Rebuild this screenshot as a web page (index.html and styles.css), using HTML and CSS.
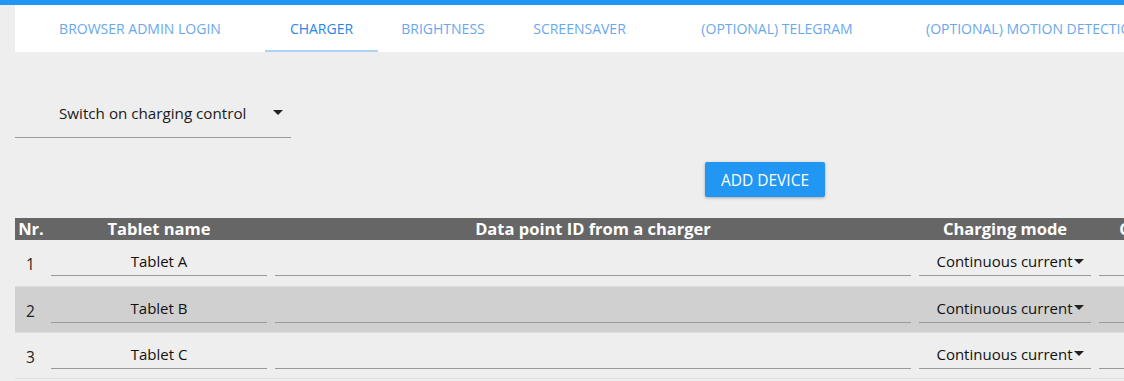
FILE: index.html
```html
<!DOCTYPE html>
<html>
<head>
<meta charset="utf-8">
<link rel="stylesheet" href="styles.css">
</head>
<body>
<div class="topbar"></div>
<div class="page">
  <nav class="tabs">
    <div class="tab tab-1">BROWSER ADMIN LOGIN</div>
    <div class="tab tab-2 active">CHARGER</div>
    <div class="tab tab-3">BRIGHTNESS</div>
    <div class="tab tab-4">SCREENSAVER</div>
    <div class="tab tab-5">(OPTIONAL) TELEGRAM</div>
    <div class="tab tab-6">(OPTIONAL) MOTION DETECTION</div>
  </nav>

  <div class="select-row">
    <div class="select">
      <span class="select-text">Switch on charging control</span>
      <span class="caret"></span>
    </div>
  </div>

  <div class="button-row">
    <button class="btn">ADD DEVICE</button>
  </div>

  <table class="grid">
    <colgroup>
      <col class="c-nr"><col class="c-name"><col class="c-dp"><col class="c-mode"><col class="c-more">
    </colgroup>
    <thead>
      <tr><th>Nr.</th><th>Tablet name</th><th>Data point ID from a charger</th><th>Charging mode</th><th>Charging current</th></tr>
    </thead>
    <tbody>
      <tr>
        <td class="nr">1</td>
        <td><div class="field center">Tablet A</div></td>
        <td><div class="field"></div></td>
        <td><div class="field mode">Continuous current<span class="caret small"></span></div></td>
        <td><div class="field"></div></td>
      </tr>
      <tr class="alt">
        <td class="nr">2</td>
        <td><div class="field center">Tablet B</div></td>
        <td><div class="field"></div></td>
        <td><div class="field mode">Continuous current<span class="caret small"></span></div></td>
        <td><div class="field"></div></td>
      </tr>
      <tr>
        <td class="nr">3</td>
        <td><div class="field center">Tablet C</div></td>
        <td><div class="field"></div></td>
        <td><div class="field mode">Continuous current<span class="caret small"></span></div></td>
        <td><div class="field"></div></td>
      </tr>
    </tbody>
  </table>
</div>
</body>
</html>
```
FILE: styles.css
```css
html, body {
  margin: 0;
  padding: 0;
  background: #eeeeee;
  font-family: "Open Sans", "Noto Sans", sans-serif;
  color: #111;
  overflow: hidden;
  width: 1124px;
  height: 381px;
}
.topbar {
  height: 5px;
  background: #2196f3;
}
.page {
  padding-left: 15px;
  overflow: hidden;
}
.tabs {
  display: flex;
  background: #fff;
  height: 47px;
  white-space: nowrap;
  overflow: hidden;
}
.tab {
  display: flex;
  align-items: center;
  justify-content: center;
  flex: none;
  font-size: 14px;
  color: #6aa8ee;
  box-sizing: border-box;
  border-bottom: 2px solid transparent;
  padding-top: 1px;
}
.tab.active {
  color: #2a86e8;
  border-bottom-color: #a9d3f7;
}
.tab-1 { width: 250px; }
.tab-2 { width: 113px; }
.tab-3 { width: 130px; }
.tab-4 { width: 143px; }
.tab-5 { width: 252px; }
.tab-6 { width: 260px; justify-content: flex-start; padding-left: 23px; }

.select-row {
  padding-top: 38px;
}
.select {
  width: 276px;
  height: 48px;
  box-sizing: border-box;
  border-bottom: 1px solid #9a9a9a;
  display: flex;
  align-items: center;
  padding-left: 44px;
  padding-bottom: 2px;
  font-size: 15.2px;
  color: #1a1a1a;
}
.select-text { flex: 1; }
.caret {
  width: 0;
  height: 0;
  border-left: 5px solid transparent;
  border-right: 5px solid transparent;
  border-top: 5px solid #222;
  margin-right: 8px;
}
.caret.small {
  margin: 0 0 0 1px;
}
.button-row {
  padding-top: 24px;
  padding-left: 690px;
  height: 35px;
}
.btn {
  width: 120px;
  height: 35px;
  border: none;
  border-radius: 2px;
  background: #2196f3;
  color: #fff;
  font-family: inherit;
  font-size: 15.5px;
  font-weight: 400;
  box-shadow: 0 1px 3px rgba(0,0,0,0.3);
  padding: 0;
}
.grid {
  margin-top: 21px;
  border-collapse: collapse;
  table-layout: fixed;
  width: 1268px;
}
.c-nr { width: 32px; }
.c-name { width: 224px; }
.c-dp { width: 644px; }
.c-mode { width: 180px; }
.c-more { width: 188px; }
.grid th {
  background: #666;
  color: #fff;
  font-size: 16.5px;
  font-weight: 700;
  height: 22px;
  padding: 0;
  white-space: nowrap;
  overflow: hidden;
  line-height: 22px;
}
.grid td {
  height: 46px;
  padding: 0 4px;
  box-sizing: border-box;
  border-bottom: 1px solid #dddddd;
  font-size: 15px;
  vertical-align: top;
}
.grid tr.alt td {
  background: #d0d0d0;
  border-top: 1px solid #c2c2c2;
}
.grid td.nr {
  padding: 14px 0 0 11px;
  font-size: 15.5px;
  line-height: 20px;
  color: #222;
}
.field {
  height: 36px;
  padding-top: 7px;
  box-sizing: border-box;
  border-bottom: 1px solid #9a9a9a;
  display: flex;
  align-items: center;
  color: #111;
}
.field.center { justify-content: center; }
.field.mode { justify-content: center; padding-left: 10px; }
```
